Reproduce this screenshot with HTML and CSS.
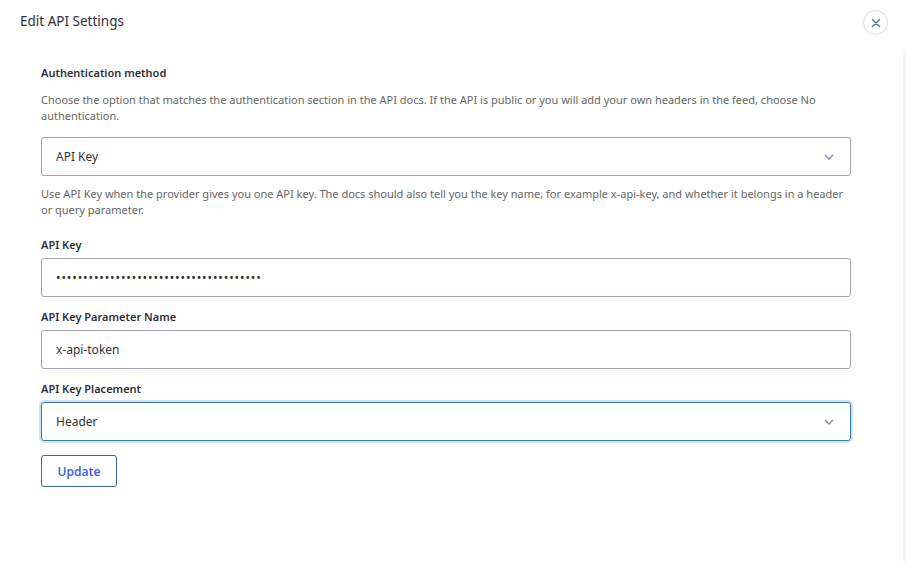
FILE: index.html
```html
<!DOCTYPE html>
<html lang="en">
<head>
<meta charset="utf-8">
<title>Edit API Settings</title>
<link rel="stylesheet" href="styles.css">
</head>
<body>
<div class="dialog">
  <header class="dialog-header">
    <h1 class="dialog-title">Edit API Settings</h1>
    <button class="close-btn" aria-label="Close">
      <svg width="10" height="10" viewBox="0 0 10 10"><path d="M1.5 1.5L8.5 8.5M8.5 1.5L1.5 8.5" stroke="#4a7db0" stroke-width="1.5" stroke-linecap="round"/></svg>
    </button>
  </header>
  <form class="form">
    <div class="field first">
      <label class="label">Authentication method</label>
      <p class="help">Choose the option that matches the authentication section in the API docs. If the API is public or you will add your own headers in the feed, choose No authentication.</p>
      <div class="control select">
        <span>API Key</span>
        <svg class="chev" width="10" height="6" viewBox="0 0 10 6"><path d="M1 1L5 5L9 1" fill="none" stroke="#8a86a8" stroke-width="1.4"/></svg>
      </div>
      <p class="help after">Use API Key when the provider gives you one API key. The docs should also tell you the key name, for example x-api-key, and whether it belongs in a header or query parameter.</p>
    </div>
    <div class="field">
      <label class="label">API Key</label>
      <div class="control"><span class="dots">••••••••••••••••••••••••••••••••••••••</span></div>
    </div>
    <div class="field">
      <label class="label">API Key Parameter Name</label>
      <div class="control"><span>x-api-token</span></div>
    </div>
    <div class="field">
      <label class="label">API Key Placement</label>
      <div class="control select focused">
        <span>Header</span>
        <svg class="chev" width="10" height="6" viewBox="0 0 10 6"><path d="M1 1L5 5L9 1" fill="none" stroke="#8a86a8" stroke-width="1.4"/></svg>
      </div>
    </div>
    <div class="actions">
      <button type="button" class="btn">Update</button>
    </div>
  </form>
</div>
<div class="scroll-track"></div>
</body>
</html>
```
FILE: styles.css
```css
html, body {
  margin: 0;
  padding: 0;
  background: #fff;
}
body {
  font-family: "Noto Sans", "Open Sans", sans-serif;
  color: #333;
  width: 906px;
  height: 562px;
  overflow: hidden;
  position: relative;
}
.dialog {
  padding: 0 0 0 20px;
}
.dialog-header {
  display: flex;
  justify-content: space-between;
  align-items: flex-start;
  height: 44px;
  box-sizing: border-box;
  padding: 10px 18px 0 0;
}
.dialog-title {
  margin: 0;
  font-size: 13.5px;
  line-height: 22px;
  font-weight: 400;
  color: #2f2f3a;
}
.close-btn {
  width: 25px;
  height: 25px;
  border-radius: 50%;
  border: 1px solid #d9d7ee;
  background: #fff;
  display: flex;
  align-items: center;
  justify-content: center;
  padding: 0;
}
.form {
  padding: 21px 0 0 21px;
  width: 810px;
}
.field {
  margin-bottom: 12px;
}
.field.first {
  margin-bottom: 19px;
}
.label {
  display: block;
  font-size: 11px;
  font-weight: 600;
  color: #2f2f3a;
  line-height: 16px;
  margin-bottom: 5px;
}
.help {
  margin: 11px 0 13px;
  font-size: 11px;
  line-height: 16px;
  color: #666;
}
.help.after {
  margin: 10px 0 0;
}
.control {
  box-sizing: border-box;
  height: 39px;
  border: 1px solid #a19fbd;
  border-radius: 3px;
  display: flex;
  align-items: center;
  justify-content: space-between;
  padding: 0 14px;
  font-size: 12px;
  color: #333;
}
.dots {
  font-size: 12px;
  letter-spacing: 0.9px;
  color: #2f2f3a;
}
.control.focused {
  border-color: #3a78b0;
  box-shadow: 0 0 0 2px #d2e2f1;
}
.chev {
  margin-right: 2px;
}
.actions {
  margin-top: 14px;
}
.btn {
  width: 76px;
  height: 32px;
  border: 1px solid #3a6896;
  border-radius: 3px;
  background: #fff;
  color: #4466e0;
  font-family: inherit;
  font-size: 12px;
  font-weight: 600;
  padding: 0;
}
.scroll-track {
  position: absolute;
  right: 0;
  top: 50px;
  bottom: 0;
  width: 3px;
  background: #f4f4f6;
}
```
